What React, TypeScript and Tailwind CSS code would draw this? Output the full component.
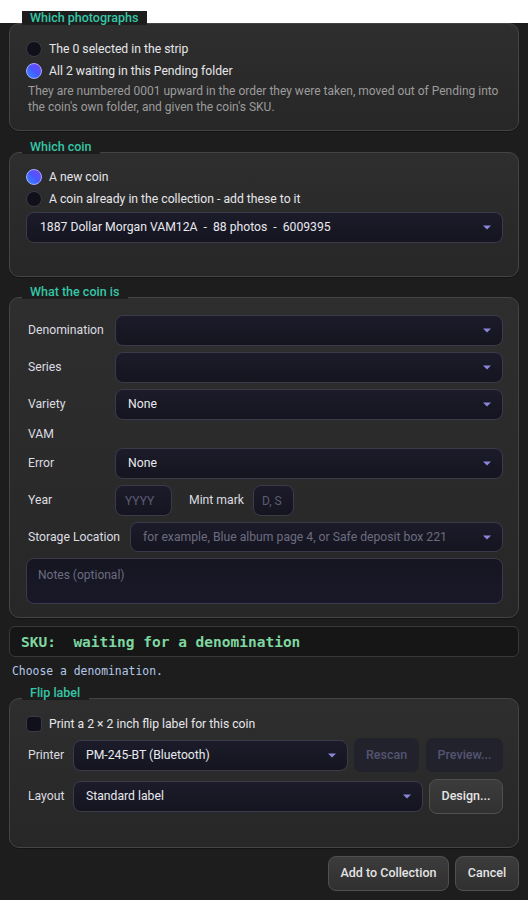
import React from "react";

const sans = { fontFamily: "Roboto, 'Noto Sans', sans-serif" };
const mono = { fontFamily: "'DejaVu Sans Mono', 'Liberation Mono', monospace" };

function Arrow() {
  return (
    <svg width="8" height="5" viewBox="0 0 8 5" className="shrink-0">
      <path d="M0 0.5 H8 L4 4.5 Z" fill="#8c86dc" />
    </svg>
  );
}

function Group({
  title,
  className,
  children,
}: {
  title: string;
  className?: string;
  children: React.ReactNode;
}) {
  return (
    <div
      className={
        "relative rounded-[10px] border border-[#444444] bg-linear-to-b from-[#2e2e2e] to-[#272727] pl-4 pr-[15px] shadow-[0_1px_0_rgba(0,0,0,0.3)] " +
        (className ?? "")
      }
    >
      <div className="absolute left-[12px] top-[-13px] h-[14px] bg-[#1d1d1d] pl-[8px] pr-[9px] text-[12.5px] font-medium leading-[13px] text-[#35c6a6]">
        {title}
      </div>
      {children}
    </div>
  );
}

function Radio({ on, label }: { on?: boolean; label: string }) {
  return (
    <div className="flex h-[22px] items-center gap-[7px]">
      <span
        className={
          "h-[16px] w-[16px] shrink-0 rounded-full border " +
          (on
            ? "border-[#a4aeff] bg-linear-to-bl from-[#7a3cf2] via-[#4658ff] to-[#2e8cff]"
            : "border-[#3a3a46] bg-[#10101a]")
        }
      />
      <span className="text-[12.2px] text-[#e6e6ea]">{label}</span>
    </div>
  );
}

function Combo({
  value,
  placeholder,
  className,
}: {
  value?: string;
  placeholder?: string;
  className?: string;
}) {
  return (
    <div
      className={
        "flex min-w-0 items-center justify-between gap-2 rounded-[8px] border border-[#3a3a4c] bg-linear-to-b from-[#1b1b2a] to-[#151520] pl-[12px] pr-[11px] " +
        (className ?? "")
      }
    >
      <span
        className={
          "truncate whitespace-pre text-[12.2px] " +
          (value ? "text-[#e8e8ee]" : "text-[#6c6c80]")
        }
      >
        {value ?? placeholder ?? ""}
      </span>
      <Arrow />
    </div>
  );
}

function Row({
  label,
  children,
  labelW = "w-[81px]",
}: {
  label: string;
  children?: React.ReactNode;
  labelW?: string;
}) {
  return (
    <div className="flex items-center gap-2">
      <span className={"shrink-0 pl-0.5 text-[12.2px] text-[#dcdce0] " + labelW}>
        {label}
      </span>
      {children}
    </div>
  );
}

export default function App() {
  return (
    <div
      className="min-h-[900px] w-[528px] bg-[#1d1d1d] px-[9px] pb-3"
      style={sans}
    >
      {/* Which photographs */}
      <Group title="Which photographs" className="mt-[23px] pb-[15px] pt-[14px]">
        <Radio label="The 0 selected in the strip" />
        <Radio on label="All 2 waiting in this Pending folder" />
        <p className="mt-px pl-0.5 text-[12px] leading-[16px] text-[#9c9c9c]">
          They are numbered 0001 upward in the order they were taken, moved out
          of Pending into the coin's own folder, and given the coin's SKU.
        </p>
      </Group>

      {/* Which coin */}
      <Group title="Which coin" className="mt-[21px] pb-[33px] pt-[13px]">
        <Radio on label="A new coin" />
        <Radio label="A coin already in the collection - add these to it" />
        <Combo
          className="mt-[2px] h-[31px] pl-[13px]"
          value="1887 Dollar Morgan VAM12A  -  88 photos  -  6009395"
        />
      </Group>

      {/* What the coin is */}
      <Group title="What the coin is" className="mt-[20px] pb-[13px] pt-[17px]">
        <div className="flex flex-col gap-[6px]">
          <Row label="Denomination">
            <Combo className="h-[31px] flex-1" />
          </Row>
          <Row label="Series">
            <Combo className="h-[31px] flex-1" />
          </Row>
          <Row label="Variety">
            <Combo className="h-[31px] flex-1" value="None" />
          </Row>
          <div className="flex h-[16px] items-center pl-0.5 text-[12.2px] text-[#dcdce0]">
            VAM
          </div>
          <Row label="Error">
            <Combo className="h-[31px] flex-1" value="None" />
          </Row>
          <Row label="Year">
            <div className="flex h-[31px] w-[57px] items-center rounded-[8px] border border-[#3a3a4c] bg-linear-to-b from-[#1b1b2a] to-[#151520] pl-[9px] text-[12px] text-[#5c5c74]">
              YYYY
            </div>
            <span className="ml-[9px] text-[12.2px] text-[#dcdce0]">Mint mark</span>
            <div className="ml-px flex h-[31px] w-[41px] items-center rounded-[8px] border border-[#3a3a4c] bg-linear-to-b from-[#1b1b2a] to-[#151520] pl-[8px] text-[12px] text-[#5c5c74]">
              D, S
            </div>
          </Row>
          <div className="flex items-center gap-[10px]">
            <span className="shrink-0 pl-0.5 text-[12.2px] text-[#dcdce0]">
              Storage Location
            </span>
            <Combo
              className="h-[30px] flex-1"
              placeholder="for example, Blue album page 4, or Safe deposit box 221"
            />
          </div>
          <div className="h-[46px] rounded-[8px] border border-[#3a3a4c] bg-linear-to-b from-[#161622] to-[#181828] px-[11px] pt-[7px] text-[12px] text-[#6c6c80]">
            Notes (optional)
          </div>
        </div>
      </Group>

      {/* SKU */}
      <div
        className="mt-[8px] flex h-[31px] items-center rounded-[6px] border border-[#383838] bg-[#161616] pl-[11px] pt-[3px] text-[14.5px] font-bold whitespace-pre text-[#7fd6a0]"
        style={mono}
      >
        SKU:  waiting for a denomination
      </div>
      <div
        className="ml-[3px] mt-[7px] text-[11.4px] leading-[14px] text-[#b4c8e8]"
        style={mono}
      >
        Choose a denomination.
      </div>

      {/* Flip label */}
      <Group title="Flip label" className="mt-[20px] pb-[33px] pt-[14px]">
        <div className="flex h-[22px] items-center gap-[7px]">
          <span className="h-[16px] w-[16px] shrink-0 rounded-[4px] border border-[#3a3a46] bg-[#10101a]" />
          <span className="text-[12.2px] text-[#e6e6ea]">
            Print a 2 × 2 inch flip label for this coin
          </span>
        </div>
        <div className="mt-[3px] flex h-[34px] items-center gap-[6px]">
          <span className="w-[41px] shrink-0 pl-0.5 text-[12.2px] text-[#dcdce0]">
            Printer
          </span>
          <Combo className="h-[31px] flex-1" value="PM-245-BT (Bluetooth)" />
          <div className="flex h-[34px] w-[65px] items-center justify-center rounded-[7px] bg-[#22222c] text-[12.5px] font-medium text-[#545472]">
            Rescan
          </div>
          <div className="ml-px flex h-[34px] w-[77px] items-center justify-center rounded-[7px] bg-[#22222c] text-[12.5px] font-medium text-[#545472]">
            Preview...
          </div>
        </div>
        <div className="mt-[7px] flex h-[35px] items-center gap-[6px]">
          <span className="w-[41px] shrink-0 pl-0.5 text-[12.2px] text-[#dcdce0]">
            Layout
          </span>
          <Combo className="h-[31px] flex-1" value="Standard label" />
          <div className="flex h-[35px] w-[74px] items-center justify-center rounded-[8px] border border-[#505050] bg-linear-to-b from-[#3c3c3c] to-[#313131] text-[12.5px] font-medium text-[#e4e4e4]">
            Design...
          </div>
        </div>
      </Group>

      {/* Actions */}
      <div className="mt-[8px] flex justify-end gap-[6px]">
        <div className="flex h-[35px] w-[121px] items-center justify-center rounded-[8px] border border-[#505050] bg-linear-to-b from-[#3c3c3c] to-[#303030] text-[12.5px] font-medium text-[#e4e4e4]">
          Add to Collection
        </div>
        <div className="flex h-[35px] w-[64px] items-center justify-center rounded-[8px] border border-[#505050] bg-linear-to-b from-[#3c3c3c] to-[#303030] text-[12.5px] font-medium text-[#e4e4e4]">
          Cancel
        </div>
      </div>
    </div>
  );
}
